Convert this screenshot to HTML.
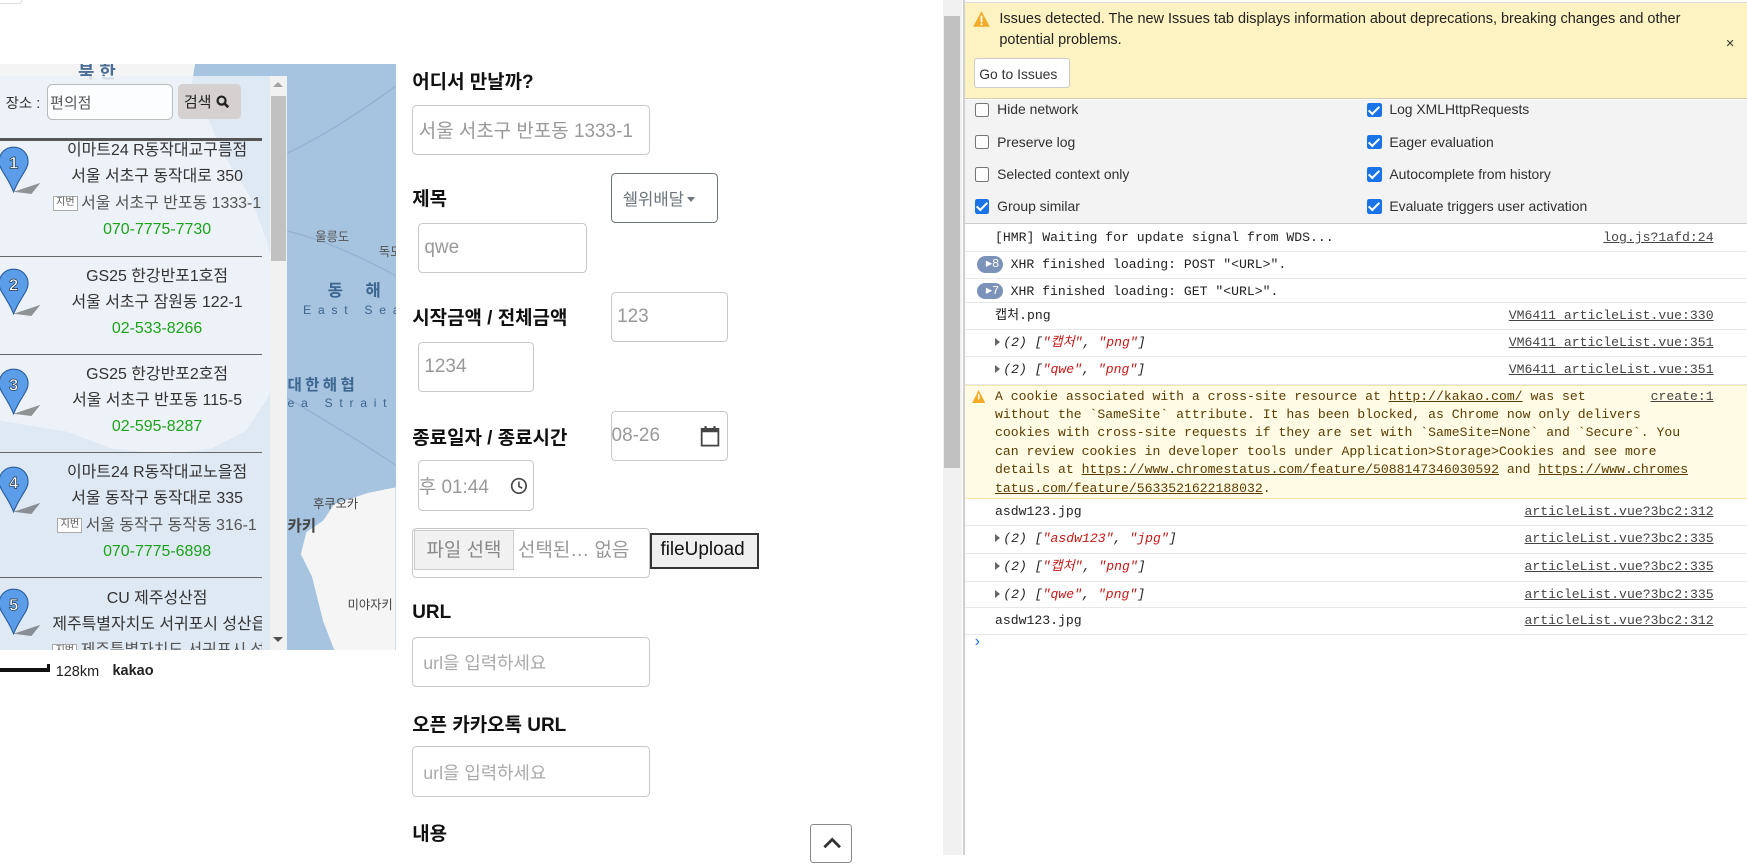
<!DOCTYPE html>
<html><head><meta charset="utf-8"><style>
*{box-sizing:border-box;margin:0;padding:0}
html,body{width:1747px;height:855px;overflow:hidden;background:#fff}
#w{position:absolute;left:0;top:0;width:1568px;height:767px;zoom:1.11416;font-family:"Liberation Sans","Noto Sans CJK KR",sans-serif}
.a{position:absolute}
.lbl{position:absolute;left:370px;font-size:17px;font-weight:bold;color:#111}
.inp{position:absolute;border:1px solid #c8c8c8;border-radius:4px;background:#fff;color:#999;font-size:17px;padding-left:5px;display:flex;align-items:center;white-space:nowrap;overflow:hidden}
.it{position:absolute;left:47px;width:188px;text-align:center;font-size:14.3px;color:#333;line-height:23.5px;white-space:nowrap;overflow:hidden}
.it .g{color:#1aa31a}
.it .j{color:#555}
.jb{display:inline-block;border:1px solid #aaa;font-size:9px;padding:0 2px;line-height:11px;margin-right:3px;vertical-align:2px;color:#555;background:#fff}
.div{position:absolute;left:0;width:235px;height:1px;background:#666}
.pin{position:absolute;left:-2px}
.dt{font-family:"Liberation Sans",sans-serif;font-size:12.5px;color:#303030}
.cb{position:absolute;width:13px;height:13px;border:1px solid #767676;border-radius:2px;background:#fff}
.cb.on{background:#1a73e8;border-color:#1a73e8}
.cb.on:after{content:"";position:absolute;left:3px;top:0px;width:4px;height:8px;border:solid #fff;border-width:0 2px 2px 0;transform:rotate(45deg)}
.row{position:absolute;left:866px;right:0;border-bottom:1px solid #e8e8e8;font-family:"Liberation Mono","Noto Sans CJK KR",monospace;font-size:11.8px;color:#222;height:24px;line-height:23px}
.src{position:absolute;right:30px;text-decoration:underline;color:#444}
.s{color:#c41a16;font-style:italic}
.tri{display:inline-block;width:0;height:0;border-left:5px solid #666;border-top:4px solid transparent;border-bottom:4px solid transparent;margin-right:3px}
.badge{display:inline-block;background:#7b93b9;color:#fff;border-radius:8px;width:23px;height:15px;line-height:15px;font-size:11px;text-align:right;padding-right:3px;vertical-align:middle}
.ml{position:absolute;white-space:nowrap}
</style></head><body><div id="w">
<div class="a" style="left:-4px;top:-6px;width:24px;height:10px;border:1px solid #ddd;border-radius:3px"></div>

<div class="a" style="left:0;top:57px;width:355px;height:526px;background:#a6c3df;overflow:hidden">
<svg width="355" height="526" style="position:absolute;left:0;top:0">
<path d="M0 0 L175 0 L172 20 L185 45 L200 80 L225 120 L240 160 L250 210 L255 260 L240 300 L220 330 L190 345 L150 350 L100 345 L60 330 L0 320Z" fill="#f3f4f3"/>
<path d="M355 380 L330 385 L300 395 L290 410 L275 420 L270 440 L280 460 L290 500 L300 526 L355 526Z" fill="#f4f5f4"/>
<path d="M258 80 Q300 60 355 20" stroke="#8fb0d2" fill="none"/>
<path d="M258 150 Q300 160 355 190" stroke="#8fb0d2" fill="none"/>
<path d="M258 300 Q310 330 355 360" stroke="#8fb0d2" fill="none"/>
</svg>
<div class="ml" style="left:70px;top:-5px;font-size:16px;font-weight:bold;color:#4a6e96">북 한</div>
<div class="ml" style="left:283px;top:147px;font-size:11px;color:#555">울릉도</div>
<div class="ml" style="left:340px;top:160px;font-size:11px;color:#555">독도</div>
<div class="ml" style="left:294px;top:192px;font-size:15px;font-weight:bold;color:#3d6690;letter-spacing:8px">동 해</div>
<div class="ml" style="left:272px;top:215px;font-size:11px;color:#3d6690;letter-spacing:6px">East Sea</div>
<div class="ml" style="left:258px;top:278px;font-size:14px;font-weight:bold;color:#3d6690;letter-spacing:3px">대한해협</div>
<div class="ml" style="left:258px;top:298px;font-size:11px;color:#3d6690;letter-spacing:6px">ea Strait</div>
<div class="ml" style="left:281px;top:386px;font-size:11px;color:#444">후쿠오카</div>
<div class="ml" style="left:258px;top:404px;font-size:14px;font-weight:bold;color:#444">카키</div>
<div class="ml" style="left:312px;top:477px;font-size:11px;color:#444">미야자키</div>
</div>

<div class="a" style="left:0;top:68px;width:258px;height:515px;background:rgba(235,241,249,.82);overflow:hidden">
<div class="a" style="left:5px;top:15px;font-size:13px;color:#333">장소 :</div>
<div class="a" style="left:42px;top:7px;width:113px;height:33px;border:1px solid #bbb;border-radius:5px;background:rgba(255,255,255,.8);font-size:13.5px;color:#555;padding:7px 2px">편의점</div>
<div class="a" style="left:160px;top:7px;width:56px;height:32px;border-radius:4px;background:#d6d1d1;font-size:13.5px;color:#222;padding:7px 5px;white-space:nowrap">검색 <svg width="12" height="12" viewBox="0 0 12 12" style="vertical-align:-1px"><circle cx="5" cy="5" r="3.6" stroke="#222" stroke-width="2" fill="none"/><path d="M7.5 7.5L11 11" stroke="#222" stroke-width="2.4"/></svg></div>
<div class="a" style="left:0;top:56px;width:235px;height:3px;background:#555"></div>

<div class="it" style="top:56px">이마트24 R동작대교구름점<br>서울 서초구 동작대로 350<br><span class="j"><span class="jb">지번</span>서울 서초구 반포동 1333-1</span><br><span class="g">070-7775-7730</span></div>
<div class="div" style="top:162px"></div>
<div class="it" style="top:169px">GS25 한강반포1호점<br>서울 서초구 잠원동 122-1<br><span class="g">02-533-8266</span></div>
<div class="div" style="top:250px"></div>
<div class="it" style="top:257px">GS25 한강반포2호점<br>서울 서초구 반포동 115-5<br><span class="g">02-595-8287</span></div>
<div class="div" style="top:338px"></div>
<div class="it" style="top:345px">이마트24 R동작대교노을점<br>서울 동작구 동작대로 335<br><span class="j"><span class="jb">지번</span>서울 동작구 동작동 316-1</span><br><span class="g">070-7775-6898</span></div>
<div class="div" style="top:450px"></div>
<div class="it" style="top:458px">CU 제주성산점<br>제주특별자치도 서귀포시 성산읍<br><span class="j"><span class="jb">지번</span>제주특별자치도 서귀포시 성</span></div>

<svg class="pin" style="top:62px" width="40" height="45"><path d="M14 42 L38 34 L30 44 Z" fill="#333" opacity=".5"/><path d="M14 2 C6 2 1 8 1 15 C1 22 8 27 14 42 C20 27 27 22 27 15 C27 8 22 2 14 2Z" fill="#5b9de8" stroke="#2b5d9c"/><text x="14" y="21" font-size="15" font-weight="bold" fill="#fff" stroke="#234" stroke-width=".6" text-anchor="middle" font-family="Liberation Sans">1</text></svg>
<svg class="pin" style="top:172px" width="40" height="45"><path d="M14 42 L38 34 L30 44 Z" fill="#333" opacity=".5"/><path d="M14 2 C6 2 1 8 1 15 C1 22 8 27 14 42 C20 27 27 22 27 15 C27 8 22 2 14 2Z" fill="#5b9de8" stroke="#2b5d9c"/><text x="14" y="21" font-size="15" font-weight="bold" fill="#fff" stroke="#234" stroke-width=".6" text-anchor="middle" font-family="Liberation Sans">2</text></svg>
<svg class="pin" style="top:261px" width="40" height="45"><path d="M14 42 L38 34 L30 44 Z" fill="#333" opacity=".5"/><path d="M14 2 C6 2 1 8 1 15 C1 22 8 27 14 42 C20 27 27 22 27 15 C27 8 22 2 14 2Z" fill="#5b9de8" stroke="#2b5d9c"/><text x="14" y="21" font-size="15" font-weight="bold" fill="#fff" stroke="#234" stroke-width=".6" text-anchor="middle" font-family="Liberation Sans">3</text></svg>
<svg class="pin" style="top:349px" width="40" height="45"><path d="M14 42 L38 34 L30 44 Z" fill="#333" opacity=".5"/><path d="M14 2 C6 2 1 8 1 15 C1 22 8 27 14 42 C20 27 27 22 27 15 C27 8 22 2 14 2Z" fill="#5b9de8" stroke="#2b5d9c"/><text x="14" y="21" font-size="15" font-weight="bold" fill="#fff" stroke="#234" stroke-width=".6" text-anchor="middle" font-family="Liberation Sans">4</text></svg>
<svg class="pin" style="top:459px" width="40" height="45"><path d="M14 42 L38 34 L30 44 Z" fill="#333" opacity=".5"/><path d="M14 2 C6 2 1 8 1 15 C1 22 8 27 14 42 C20 27 27 22 27 15 C27 8 22 2 14 2Z" fill="#5b9de8" stroke="#2b5d9c"/><text x="14" y="21" font-size="15" font-weight="bold" fill="#fff" stroke="#234" stroke-width=".6" text-anchor="middle" font-family="Liberation Sans">5</text></svg>

<div class="a" style="left:242px;top:0;width:16px;height:515px;background:#f1f1f1"></div>
<div class="a" style="left:243px;top:18px;width:14px;height:148px;background:#c1c1c1"></div>
<div class="a" style="left:245px;top:6px;border-left:5px solid transparent;border-right:5px solid transparent;border-bottom:5px solid #a3a3a3"></div>
<div class="a" style="left:245px;top:504px;border-left:5px solid transparent;border-right:5px solid transparent;border-top:5px solid #505050"></div>
</div>
<div class="a" style="left:0;top:600px;width:44px;height:3px;background:#111"></div>
<div class="a" style="left:42px;top:596px;width:3px;height:7px;background:#111"></div>
<div class="a" style="left:50px;top:596px;font-size:13px;color:#222">128km</div>
<div class="a" style="left:101px;top:595px;font-size:13px;font-weight:bold;color:#222">kakao</div>

<div class="lbl" style="top:60px">어디서 만날까?</div>
<div class="inp" style="left:370px;top:94px;width:213px;height:45px">서울 서초구 반포동 1333-1</div>
<div class="lbl" style="top:165px">제목</div>
<div class="a" style="left:548px;top:155px;width:96px;height:45px;border:1px solid #6c757d;border-radius:4px;font-size:15px;color:#6c757d;padding:11px 0 0 10px;white-space:nowrap">쉘위배달<span style="display:inline-block;margin-left:3px;border-left:4px solid transparent;border-right:4px solid transparent;border-top:5px solid #6c757d;vertical-align:3px"></span></div>
<div class="inp" style="left:375px;top:200px;width:152px;height:45px">qwe</div>
<div class="lbl" style="top:272px">시작금액 / 전체금액</div>
<div class="inp" style="left:548px;top:262px;width:105px;height:45px">123</div>
<div class="inp" style="left:375px;top:307px;width:104px;height:45px">1234</div>
<div class="lbl" style="top:380px">종료일자 / 종료시간</div>
<div class="inp" style="left:548px;top:369px;width:105px;height:45px;padding-left:0">08-26<svg width="18" height="20" style="position:absolute;left:79px;top:12px"><rect x="1.5" y="3.5" width="15" height="15" fill="none" stroke="#444" stroke-width="1.6"/><rect x="1.5" y="3.5" width="15" height="3" fill="#444"/><rect x="4" y="1" width="2" height="3" fill="#444"/><rect x="12" y="1" width="2" height="3" fill="#444"/></svg></div>
<div class="inp" style="left:375px;top:413px;width:104px;height:46px;padding-left:0">후 01:44<svg width="16" height="16" style="position:absolute;left:82px;top:14px"><circle cx="8" cy="8" r="6.5" fill="none" stroke="#444" stroke-width="1.5"/><path d="M8 4V8.5L11 10" fill="none" stroke="#444" stroke-width="1.4"/></svg></div>
<div class="inp" style="left:370px;top:474px;width:213px;height:45px;align-items:flex-start;padding:1px 0 0 1px"><span style="display:inline-block;border:1px solid #ccc;background:#f1f1f1;color:#888;padding:3px 10px;height:36px;line-height:28px">파일 선택</span><span style="padding:4px 0 0 4px">선택된… 없음</span></div>
<div class="a" style="left:583px;top:478px;width:98px;height:33px;border:2px solid #333;background:#efefef;font-size:17px;color:#111;padding:4px 0 0 8px">fileUpload</div>
<div class="lbl" style="top:540px">URL</div>
<div class="inp" style="left:370px;top:572px;width:213px;height:45px;font-size:16px;color:#aaa;padding-left:9px">url을 입력하세요</div>
<div class="lbl" style="top:637px">오픈 카카오톡 URL</div>
<div class="inp" style="left:370px;top:670px;width:213px;height:45px;font-size:16px;color:#aaa;padding-left:9px">url을 입력하세요</div>
<div class="lbl" style="top:735px">내용</div>
<div class="a" style="left:727px;top:740px;width:38px;height:35px;border:1px solid #888;border-radius:3px;background:#fff"><svg width="38" height="30"><path d="M12 20L19 13L26 20" stroke="#333" stroke-width="2.5" fill="none"/></svg></div>

<div class="a" style="left:846px;top:0;width:17px;height:767px;background:#f1f1f1"></div>
<div class="a" style="left:847px;top:14px;width:15px;height:406px;background:#c1c1c1"></div>
<div class="a" style="left:864px;top:0;width:2px;height:767px;background:#cfcfcf"></div>

<div class="a dt" style="left:866px;top:0;width:702px;height:767px;background:#fff">
<div class="a" style="left:0;top:2px;width:702px;height:87px;background:#fdf2c1;border-top:1px solid #ddd;border-bottom:1px solid #d4cfb4"></div>
<svg class="a" style="left:6px;top:9px" width="17" height="16"><path d="M8.5 1L16 15H1Z" fill="#f2ab26"/><rect x="7.7" y="5" width="1.6" height="6" fill="#fff"/><rect x="7.7" y="12" width="1.6" height="1.6" fill="#fff"/></svg>
<div class="a" style="left:31px;top:8px;width:640px;line-height:19px;font-size:13px;color:#222">Issues detected. The new Issues tab displays information about deprecations, breaking changes and other potential problems.</div>
<div class="a" style="left:683px;top:32px;font-size:13px;color:#333">×</div>
<div class="a" style="left:8px;top:52px;width:86px;height:27px;background:#fff;border:1px solid #ccc;border-radius:3px;font-size:12.5px;color:#333;padding:6px 0 0 4px">Go to Issues</div>
<div class="a" style="left:0;top:90px;width:702px;height:111px;background:#f3f3f3;border-bottom:1px solid #ccc"></div>
<div class="cb" style="left:9px;top:92px"></div><div class="a" style="left:29px;top:91px">Hide network</div>
<div class="cb" style="left:9px;top:121px"></div><div class="a" style="left:29px;top:120px">Preserve log</div>
<div class="cb" style="left:9px;top:150px"></div><div class="a" style="left:29px;top:149px">Selected context only</div>
<div class="cb on" style="left:9px;top:179px"></div><div class="a" style="left:29px;top:178px">Group similar</div>
<div class="cb on" style="left:361px;top:92px"></div><div class="a" style="left:381px;top:91px">Log XMLHttpRequests</div>
<div class="cb on" style="left:361px;top:121px"></div><div class="a" style="left:381px;top:120px">Eager evaluation</div>
<div class="cb on" style="left:361px;top:150px"></div><div class="a" style="left:381px;top:149px">Autocomplete from history</div>
<div class="cb on" style="left:361px;top:179px"></div><div class="a" style="left:381px;top:178px">Evaluate triggers user activation</div>
</div>
<div class="row" style="top:202px"><span style="padding-left:27px">[HMR] Waiting for update signal from WDS...</span><span class="src">log.js?1afd:24</span></div>
<div class="row" style="top:226px"><span style="padding-left:11px"><span class="badge">▸8</span> XHR finished loading: POST "&lt;URL&gt;".</span></div>
<div class="row" style="top:250px;height:22px"><span style="padding-left:11px"><span class="badge">▸7</span> XHR finished loading: GET "&lt;URL&gt;".</span></div>
<div class="row" style="top:272px"><span style="padding-left:27px">캡처.png</span><span class="src">VM6411 articleList.vue:330</span></div>
<div class="row" style="top:296px"><span style="padding-left:27px"><span class="tri"></span><i>(2) [<span class="s">"캡처"</span>, <span class="s">"png"</span>]</i></span><span class="src">VM6411 articleList.vue:351</span></div>
<div class="row" style="top:320px;height:26px"><span style="padding-left:27px"><span class="tri"></span><i>(2) [<span class="s">"qwe"</span>, <span class="s">"png"</span>]</i></span><span class="src">VM6411 articleList.vue:351</span></div>
<div class="row" style="top:346px;height:102px;background:#fffbe5;border-top:1px solid #f5e7a8;border-bottom:1px solid #f5e7a8;color:#5c3c00;line-height:16.5px;padding:1px 0 0 27px;font-size:11.8px;white-space:nowrap">
<svg style="position:absolute;left:6px;top:3px" width="12" height="12"><path d="M6 0L12 12H0Z" fill="#f2ab26"/><rect x="5.3" y="3.5" width="1.4" height="5" fill="#fff"/></svg>
<span class="src" style="right:30px;top:1px">create:1</span>A cookie associated with a cross-site resource at <u>http://kakao.com/</u> was set<br>without the `SameSite` attribute. It has been blocked, as Chrome now only delivers<br>cookies with cross-site requests if they are set with `SameSite=None` and `Secure`. You<br>can review cookies in developer tools under Application&gt;Storage&gt;Cookies and see more<br>details at <u>https://www.chromestatus.com/feature/5088147346030592</u> and <u>https://www.chromes</u><br><u>tatus.com/feature/5633521622188032</u>.</div>
<div class="row" style="top:448px"><span style="padding-left:27px">asdw123.jpg</span><span class="src">articleList.vue?3bc2:312</span></div>
<div class="row" style="top:472px;height:25px"><span style="padding-left:27px"><span class="tri"></span><i>(2) [<span class="s">"asdw123"</span>, <span class="s">"jpg"</span>]</i></span><span class="src">articleList.vue?3bc2:335</span></div>
<div class="row" style="top:497px;height:25px"><span style="padding-left:27px"><span class="tri"></span><i>(2) [<span class="s">"캡처"</span>, <span class="s">"png"</span>]</i></span><span class="src">articleList.vue?3bc2:335</span></div>
<div class="row" style="top:522px;height:24px"><span style="padding-left:27px"><span class="tri"></span><i>(2) [<span class="s">"qwe"</span>, <span class="s">"png"</span>]</i></span><span class="src">articleList.vue?3bc2:335</span></div>
<div class="row" style="top:546px"><span style="padding-left:27px">asdw123.jpg</span><span class="src">articleList.vue?3bc2:312</span></div>
<div class="a" style="left:873px;top:568px;color:#1a73e8;font-size:14px;font-family:'Liberation Mono',monospace">›</div>
</div></body></html>
